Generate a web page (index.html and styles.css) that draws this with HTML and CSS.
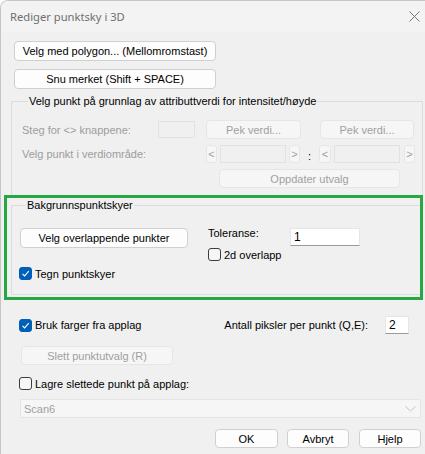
FILE: index.html
```html
<!DOCTYPE html>
<html>
<head>
<meta charset="utf-8">
<link rel="stylesheet" href="styles.css">
</head>
<body>
<div class="window">
  <div class="titlebar">
    <span class="title">Rediger punktsky i 3D</span>
    <svg class="close" width="11" height="11" viewBox="0 0 11 11"><path d="M0.5 0.5 L10.5 10.5 M10.5 0.5 L0.5 10.5" stroke="#777" stroke-width="1" fill="none"/></svg>
  </div>
  <div class="content">
    <div class="btn btn-top">Velg med polygon... (Mellomromstast)</div>
    <div class="btn btn-top btn-second">Snu merket (Shift + SPACE)</div>

    <div class="group group1">
      <div class="legend">Velg punkt på grunnlag av attributtverdi for intensitet/høyde</div>
      <div class="row rowA">
        <span class="lbl dis lblA">Steg for &lt;&gt; knappene:</span>
        <span class="field step"></span>
        <div class="btn dis pek1">Pek verdi...</div>
        <div class="btn dis pek2">Pek verdi...</div>
      </div>
      <div class="row rowB">
        <span class="lbl dis lblB">Velg punkt i verdiområde:</span>
        <div class="btn dis arrow">&lt;</div>
        <span class="field range r1"></span>
        <div class="btn dis arrow gt">&gt;</div>
        <span class="colon">:</span>
        <div class="btn dis arrow lt2">&lt;</div>
        <span class="field range r1"></span>
        <div class="btn dis arrow gt2">&gt;</div>
      </div>
      <div class="btn dis update">Oppdater utvalg</div>
    </div>

    <div class="group group2">
      <div class="legend">Bakgrunnspunktskyer</div>
      <div class="g2body">
        <div class="g2left">
          <div class="btn overlap">Velg overlappende punkter</div>
          <div class="cb cb-tegn"><span class="box checked"><svg width="11" height="11" viewBox="0 0 11 11"><path d="M2.5 5.8 L4.6 7.9 L8.8 3.2" stroke="#fff" stroke-width="1.1" fill="none"/></svg></span>Tegn punktskyer</div>
        </div>
        <div class="g2right">
          <div class="tolrow">
            <span class="tol-label">Toleranse:</span>
            <span class="tb tol-input">1</span>
          </div>
          <div class="cb cb-2d"><span class="box"></span>2d overlapp</div>
        </div>
      </div>
    </div>

    <div class="bottom">
      <div class="brukrow">
        <div class="cb"><span class="box checked"><svg width="11" height="11" viewBox="0 0 11 11"><path d="M2.5 5.8 L4.6 7.9 L8.8 3.2" stroke="#fff" stroke-width="1.1" fill="none"/></svg></span>Bruk farger fra applag</div>
        <span class="antall">Antall piksler per punkt (Q,E):</span>
        <span class="tb pix-input">2</span>
      </div>
      <div class="btn dis slett">Slett punktutvalg (R)</div>
      <div class="cb cb-lagre"><span class="box"></span>Lagre slettede punkt på applag:</div>
      <div class="dropdown">
        <span>Scan6</span>
        <svg width="11" height="6" viewBox="0 0 11 6"><path d="M0.5 0.5 L5.5 5 L10.5 0.5" stroke="#c4c4c4" stroke-width="1" fill="none"/></svg>
      </div>
      <div class="actions">
        <div class="btn act ok">OK</div>
        <div class="btn act avbryt">Avbryt</div>
        <div class="btn act hjelp">Hjelp</div>
      </div>
    </div>
  </div>
  <div class="highlight"></div>
</div>
</body>
</html>
```

FILE: styles.css
```css
html, body {
  margin: 0;
  padding: 0;
  background: #ffffff;
}
body {
  font-family: "Liberation Sans", Arial, sans-serif;
  font-size: 11px;
  color: #000;
}
.window {
  position: relative;
  width: 425px;
  height: 454px;
  box-sizing: border-box;
  border-top: 1px solid #c6c6c6;
  border-left: 1px solid #c6c6c6;
  border-top-left-radius: 8px;
  background: #f0f0f0;
  overflow: hidden;
}
.titlebar {
  height: 31px;
  background: #f3f3f3;
  display: flex;
  align-items: center;
  justify-content: space-between;
  padding: 0 5px 0 9px;
}
.title {
  font-family: "Noto Sans", "Open Sans", sans-serif;
  font-size: 11.2px;
  color: #6f6f6f;
}
.content {
  padding: 9px 2px 0 10px;
}
.btn {
  box-sizing: border-box;
  background: #fdfdfd;
  border: 1px solid #d0d0d0;
  border-radius: 4px;
  display: flex;
  align-items: center;
  justify-content: center;
  color: #000;
  white-space: nowrap;
}
.btn.dis {
  background: #f6f6f6;
  border-color: #e6e6e6;
  color: #a0a0a0;
}
.btn-top {
  width: 202px;
  height: 20px;
  margin-left: 3px;
}
.btn-second {
  margin-top: 8px;
}
.group {
  border: 1px solid #dcdcdc;
  box-sizing: border-box;
}
.legend {
  margin: -8px 0 0 6px;
  padding: 0 1px;
  background: #f0f0f0;
  width: max-content;
  line-height: 14px;
}
.group1 {
  margin-top: 12px;
  padding: 0 0 7px 10px;
}
.row {
  display: flex;
  align-items: center;
}
.lbl {
  color: #9d9d9d;
}
.rowA {
  margin-top: 12px;
  height: 19px;
}
.lblA {
  width: 136px;
}
.field {
  box-sizing: border-box;
  border: 1px solid #e2e2e2;
  background: #f0f0f0;
}
.step {
  width: 37px;
  height: 17px;
}
.pek1 {
  margin-left: 11px;
  width: 95px;
  height: 19px;
}
.pek2 {
  margin-left: 19px;
  width: 94px;
  height: 19px;
}
.rowB {
  margin-top: 6px;
  height: 18px;
}
.lblB {
  width: 184px;
}
.arrow {
  width: 11px;
  height: 18px;
  border-radius: 3px;
}
.range {
  width: 66px;
  height: 18px;
  margin-left: 3px;
}
.gt {
  margin-left: 3px;
}
.colon {
  width: 19px;
  text-align: center;
  align-self: flex-end;
  line-height: 14px;
}
.lt2 {
  width: 12px;
}
.gt2 {
  margin-left: 4px;
}
.update {
  margin-top: 6px;
  margin-left: 197px;
  width: 181px;
  height: 19px;
}
.group2 {
  margin-top: 9px;
  padding: 0 0 14px 8px;
}
.g2body {
  display: flex;
}
.g2left {
  margin-top: 16px;
  width: 168px;
}
.overlap {
  width: 168px;
  height: 20px;
}
.cb {
  display: flex;
  align-items: center;
  height: 13px;
  white-space: nowrap;
}
.box {
  box-sizing: border-box;
  width: 13px;
  height: 13px;
  border: 1px solid #3c3c3c;
  border-radius: 3px;
  background: #f6f6f6;
  margin-right: 3px;
  display: flex;
  align-items: center;
  justify-content: center;
  flex: none;
}
.box.checked {
  background: #005fb8;
  border-color: #005fb8;
}
.cb-tegn {
  margin-top: 19px;
  margin-left: -1px;
}
.g2right {
  margin-top: 15px;
  margin-left: 20px;
}
.tolrow {
  display: flex;
  align-items: flex-start;
  height: 19px;
}
.tol-label {
  width: 82px;
  line-height: 13px;
}
.tb {
  box-sizing: border-box;
  background: #fff;
  border: 1px solid #e6e6e6;
  border-bottom-color: #9a9a9a;
  display: flex;
  align-items: center;
  padding-left: 3px;
  font-size: 12px;
}
.tol-input {
  width: 70px;
  height: 18px;
  margin-top: 1px;
}
.cb-2d {
  margin-top: 2px;
}
.bottom {
  padding-left: 8px;
}
.brukrow {
  margin-top: 21px;
  height: 18px;
  display: flex;
  align-items: center;
}
.antall {
  margin-left: auto;
  margin-right: 17px;
}
.pix-input {
  width: 24px;
  height: 18px;
  margin-right: 14px;
}
.slett {
  margin-top: 12px;
  margin-left: 2px;
  width: 152px;
  height: 19px;
}
.cb-lagre {
  margin-top: 12px;
}
.dropdown {
  box-sizing: border-box;
  margin-top: 9px;
  margin-left: 1px;
  width: 401px;
  height: 19px;
  background: #f6f6f6;
  border: 1px solid #e4e4e4;
  border-radius: 2px;
  display: flex;
  align-items: center;
  justify-content: space-between;
  padding: 0 4px 0 3px;
  color: #a0a0a0;
}
.actions {
  margin-top: 11px;
  display: flex;
  justify-content: flex-end;
  padding-right: 2px;
}
.act {
  width: 62px;
  height: 19px;
}
.ok {
  width: 63px;
}
.avbryt {
  margin-left: 9px;
}
.hjelp {
  margin-left: 10px;
}
.highlight {
  position: absolute;
  left: 3px;
  top: 194px;
  width: 419px;
  height: 105px;
  box-sizing: border-box;
  border: 3px solid #28a745;
  pointer-events: none;
}
```
